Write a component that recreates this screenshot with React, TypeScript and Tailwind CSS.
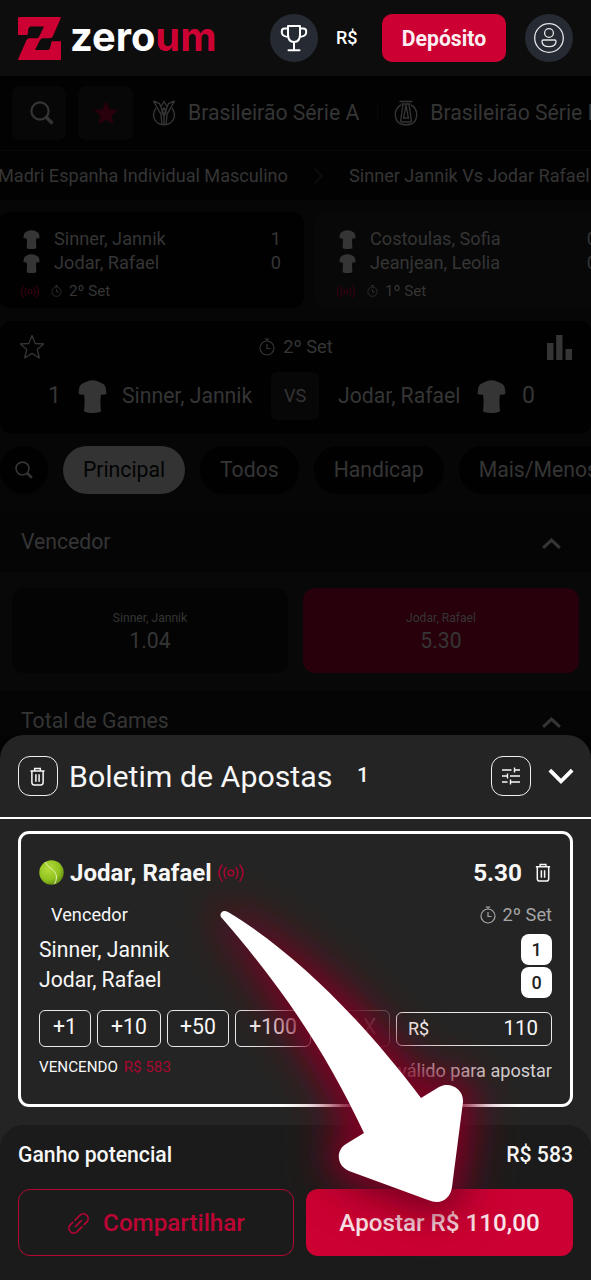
import type { ReactNode } from 'react';
import clsx from 'clsx';

type IconProps = { className?: string };

const tabs = ['Todos', 'Handicap', 'Mais/Menos'];

const liveMatches = [
    { home: 'Sinner, Jannik', away: 'Jodar, Rafael', score: [1, 0], set: '2º Set', active: true },
    { home: 'Costoulas, Sofia', away: 'Jeanjean, Leolia', score: [0, 0], set: '1º Set', active: false },
];

const chips = [
    { label: '+1', width: 'w-[52px]' },
    { label: '+10', width: 'w-16' },
    { label: '+50', width: 'w-[62px]' },
    { label: '+100', width: 'w-[76px]' },
];

function LogoMark() {
    return (
        <svg className="h-[43px] w-[43px] shrink-0" viewBox="0 0 43 43" fill="#cc0033">
            <path d="M1 0H42Q43.200 0 42.700 1.200L35 19Q34 21.300 31.500 21.300H25Q23 21.300 22 23L17 33H29.500Q31.500 33 32 31L33.700 24.300H43V43H1Q-.200 43 .300 41.800L8.300 23.500Q9.300 21.300 11.500 21.300H18.500Q20.300 21.300 21 19.800L26 9.500H13Q11 9.500 10.500 11.500L9.500 18H0V1Q0 0 1 0Z" />
        </svg>
    );
}

function TrophyIcon({ className }: IconProps) {
    return (
        <svg className={className} viewBox="0 0 28 28" fill="none" stroke="currentColor" strokeWidth="2" strokeLinecap="round" strokeLinejoin="round">
            <path d="M8 2H20V10.500C20 15 18 18 14 18S8 15 8 10.500ZM8 4.500H4.500Q1.800 4.500 1.800 7.500V8.500Q2.200 12.500 8.500 13M20 4.500H23.500Q26.200 4.500 26.200 7.500V8.500Q25.800 12.500 19.500 13M14 18V26M8.500 26.300H19.500" />
        </svg>
    );
}

function UserIcon({ className }: IconProps) {
    return (
        <svg className={className} viewBox="0 0 32 32" fill="none" stroke="currentColor" strokeWidth="1.300">
            <circle cx="16" cy="16" r="14.300" />
            <circle cx="16" cy="11" r="4.400" />
            <path d="M10.300 18H21.700Q23 18 23 19.300C23 22.800 20.300 24.700 16 24.700S9 22.800 9 19.300Q9 18 10.300 18Z" />
        </svg>
    );
}

function SearchIcon({ className }: IconProps) {
    return (
        <svg className={className} viewBox="0 0 24 24" fill="none" stroke="currentColor">
            <circle cx="10" cy="10" r="8.600" strokeWidth="2.200" />
            <path d="M16 16L22.500 22.500" strokeWidth="3.400" />
        </svg>
    );
}

function StarIcon({ className, filled }: IconProps & { filled?: boolean }) {
    return (
        <svg className={className} viewBox="0 0 26 26" fill={filled ? 'currentColor' : 'none'} stroke="currentColor" strokeWidth="1.300" strokeLinejoin="round">
            <path d="M13 1.500L16.200 9.500L24.700 10L18.200 15.500L20.300 24L13 19.400L5.700 24L7.800 15.500L1.300 10L9.800 9.500Z" />
        </svg>
    );
}

function CupAIcon() {
    return (
        <svg className="h-[26px] w-[24px]" viewBox="0 0 24 26" fill="none" stroke="currentColor" strokeWidth="1.400">
            <path d="M1.500 1L9 14.500L10 24.500M22.500 1L15 14.500L14 24.500M1.500 1L7.500 3.500L12 15L16.500 3.500L22.500 1M9.300 6L12 1.500L14.700 6M12 8L9.800 12L12 16L14.200 12ZM12 16V25" />
            <path d="M4 8C-.500 14 1.500 21.500 8 24Q12 25.500 16 24C22.500 21.500 24.500 14 20 8" />
        </svg>
    );
}

function CupBIcon() {
    return (
        <svg className="h-[26px] w-[24px]" viewBox="0 0 24 26" fill="none" stroke="currentColor" strokeWidth="1.400">
            <path d="M5.500 1.500H18.500M7.500 4H16.500M9 4L6.500 22M15 4L17.500 22M12 5L9.500 19M12 5L14.500 19M9 18H15M7 22H17" />
            <path d="M7 5C-1 9-.500 22 8 24.300Q12 25.300 16 24.300C24.500 22 25 9 17 5" />
        </svg>
    );
}

function ShirtIcon({ className }: IconProps) {
    return (
        <svg className={className} viewBox="0 0 28 33" fill="currentColor">
            <path d="M9.500 1Q14-.300 18.500 1L24 3.500Q27 5 27.500 9L28 14Q25.500 15.300 22.500 14.500L22 19Q21.800 25 22.500 31.500Q19 33 14 33T5.500 31.500Q6.200 25 6 19L5.500 14.500Q2.500 15.300 0 14L.500 9Q1 5 4 3.500Z" />
        </svg>
    );
}

function LiveIcon({ className }: IconProps) {
    return (
        <svg className={className} viewBox="0 0 26 18" fill="none" stroke="currentColor" strokeWidth="1.500" strokeLinecap="round">
            <circle cx="13" cy="9" r="2.800" />
            <path d="M8 3.500Q4.200 9 8 14.500M18 3.500Q21.800 9 18 14.500M4 1Q-2 9 4 17M22 1Q28 9 22 17" />
        </svg>
    );
}

function StopwatchIcon({ className }: IconProps) {
    return (
        <svg className={className} viewBox="0 0 16 18" fill="none" stroke="currentColor" strokeWidth="1.200">
            <circle cx="8" cy="10" r="7" />
            <path d="M5.800 1H10.200M8 1V3M8 6V10.500H11.500" />
        </svg>
    );
}

function BarsIcon() {
    return (
        <svg className="h-[25px] w-[25px]" viewBox="0 0 25 25" fill="currentColor">
            <path d="M0 8H6.500V25H0ZM9.200 0H15.500V25H9.200ZM18.500 14H25V25H18.500Z" />
        </svg>
    );
}

function TrashIcon({ className }: IconProps) {
    return (
        <svg className={className} viewBox="0 0 16 20" fill="none" stroke="currentColor" strokeWidth="1.600">
            <path d="M.500 4H15.500M5 4V1.500H11V4M2 4V16.500Q2 19 4.500 19H11.500Q14 19 14 16.500V4M6.300 7.500V15.500M9.700 7.500V15.500" />
        </svg>
    );
}

function SlidersIcon({ className }: IconProps) {
    return (
        <svg className={className} viewBox="0 0 18 18" fill="none" stroke="currentColor" strokeWidth="1.400">
            <path d="M0 3H9.500M12.500 3H18M12.500 .500V5.500M0 9H5.500M5.500 6.500V11.500M8 9H18M0 15H5.500M8.500 15H18M8.500 12.500V17.500" />
        </svg>
    );
}

function LinkIcon({ className }: IconProps) {
    return (
        <svg className={className} viewBox="0 0 22 22" fill="none" stroke="currentColor" strokeWidth="1.500" strokeLinecap="round">
            <path transform="rotate(-45 11 11)" d="M11 6.400H17.500A4.600 4.600 0 0 1 17.500 15.600H14M11 15.600H4.500A4.600 4.600 0 0 1 4.500 6.400H8M7 11H15" />
        </svg>
    );
}

function Chevron({ className, d, stroke = 3 }: IconProps & { d: string; stroke?: number }) {
    return (
        <svg className={className} viewBox="0 0 24 16" fill="none" stroke="currentColor" strokeWidth={stroke}>
            <path d={d} />
        </svg>
    );
}

function TennisBall() {
    return (
        <svg className="h-[25px] w-[25px] shrink-0" viewBox="0 0 25 25">
            <defs>
                <radialGradient id="ball" cx="38%" cy="35%" r="70%">
                    <stop offset="0%" stopColor="#b6dc3c" />
                    <stop offset="65%" stopColor="#90c21f" />
                    <stop offset="100%" stopColor="#648d14" />
                </radialGradient>
            </defs>
            <circle cx="12.500" cy="12.500" r="12.200" fill="url(#ball)" />
            <path d="M6.500 2C8 8 17 9 17.500 17Q17.500 21 15.500 24" fill="none" stroke="#e4efb0" strokeWidth="1" />
        </svg>
    );
}

function Header() {
    return (
        <header className="flex h-[76px] items-center bg-[#0d0d0d] pl-[18px]">
            <LogoMark />
            <span className="ml-[9px] w-[190px] -translate-y-[1px] font-['Inter',sans-serif] text-[39.800px] leading-[44px] font-bold text-white">
                zero<span className="text-[#cc0033]">um</span>
            </span>
            <span className="ml-[10px] flex h-12 w-12 shrink-0 items-center justify-center rounded-full bg-[#262b33] text-white">
                <TrophyIcon className="h-7 w-7" />
            </span>
            <span className="ml-[18px] w-[46px] text-lg font-medium text-white">R$</span>
            <button className="h-12 w-[124px] shrink-0 rounded-[10px] bg-[#cc0033] pt-[2px] text-[21.2px] font-bold text-[#fdeef2]">
                Depósito
            </button>
            <span className="ml-[19px] flex h-12 w-12 shrink-0 items-center justify-center rounded-full bg-[#262b33] text-[#e4e5e7]">
                <UserIcon className="h-8 w-8" />
            </span>
        </header>
    );
}

function LeagueNav() {
    return (
        <nav className="flex h-[75px] items-center overflow-hidden border-b border-[#070707] bg-[#020202] pl-3 text-[21.2px] whitespace-nowrap">
            <span className="flex h-[54px] w-[54px] shrink-0 items-center justify-center rounded-lg bg-[#070707] pl-[5px]">
                <SearchIcon className="h-6 w-6" />
            </span>
            <span className="ml-3 flex h-[54px] w-[55px] shrink-0 items-center justify-center rounded-lg bg-[#070707] text-[#29000c]">
                <StarIcon className="h-6 w-6" filled />
            </span>
            <span className="ml-[19px] shrink-0">
                <CupAIcon />
            </span>
            <span className="ml-3 shrink-0">Brasileirão Série A</span>
            <span className="mr-4 ml-[18px] h-[18px] w-px shrink-0 bg-[#090909]" />
            <span className="shrink-0">
                <CupBIcon />
            </span>
            <span className="ml-3 shrink-0">Brasileirão Série B</span>
        </nav>
    );
}

function Breadcrumb() {
    return (
        <div className="flex h-[49px] items-center overflow-hidden bg-[#020202] text-[18.1px] whitespace-nowrap">
            <span className="-ml-[2px] w-[290px] shrink-0">Madri Espanha Individual Masculino</span>
            <Chevron className="ml-[19px] h-4 w-6 shrink-0 text-[#0c0c0c]" d="M8 1L15 8L8 15" stroke={2} />
            <span className="ml-[18px] shrink-0">Sinner Jannik Vs Jodar Rafael</span>
        </div>
    );
}

function MatchCard({ match }: { match: (typeof liveMatches)[number] }) {
    const rows = [match.home, match.away];

    return (
        <div className={clsx('h-24 w-[306px] shrink-0 rounded-xl pt-[15px] pr-[23px] pl-[22px]', match.active ? 'bg-[#010101]' : 'bg-[#080808]')}>
            {rows.map((name, i) => (
                <div key={name} className="flex h-6 items-center text-[18.2px]">
                    <ShirtIcon className="ml-[3px] h-[19px] w-[17px]" />
                    <span className="ml-[14px] flex-1">{name}</span>
                    <span>{match.score[i]}</span>
                </div>
            ))}
            <div className="mt-[6px] flex h-5 items-center text-[15.2px]">
                <LiveIcon className="h-[13px] w-5 text-[#350010]" />
                <StopwatchIcon className="ml-[11px] h-3 w-[11px]" />
                <span className="ml-[7px]">{match.set}</span>
            </div>
        </div>
    );
}

function Scoreboard() {
    return (
        <section className="mt-[13px] h-[113px] rounded-xl bg-[#010101] pt-[13px]">
            <div className="flex h-[26px] items-center justify-between pr-[19px] pl-[19px]">
                <StarIcon className="h-[26px] w-[26px]" />
                <span className="flex items-center text-[18.2px]">
                    <StopwatchIcon className="mr-2 h-[18px] w-4" />
                    2º Set
                </span>
                <BarsIcon />
            </div>
            <div className="mt-3 flex h-12 items-center text-[21.2px]">
                <span className="w-[78px] shrink-0 pl-12 text-[23px]">1</span>
                <ShirtIcon className="h-[33px] w-[29px] shrink-0" />
                <span className="w-[164px] shrink-0 pb-px pl-[15px]">Sinner, Jannik</span>
                <span className="flex h-12 w-12 shrink-0 items-center justify-center rounded-md bg-[#070707] text-lg">VS</span>
                <span className="ml-[19px] w-[139px] shrink-0 pb-px">Jodar, Rafael</span>
                <ShirtIcon className="h-[33px] w-[29px] shrink-0" />
                <span className="ml-4 text-[23px]">0</span>
            </div>
        </section>
    );
}

function MarketTabs() {
    return (
        <div className="mt-3 flex h-12 gap-[15px] overflow-hidden text-[21.2px] whitespace-nowrap">
            <span className="flex w-12 shrink-0 items-center justify-center rounded-full bg-[#010101]">
                <SearchIcon className="h-[18px] w-[18px]" />
            </span>
            <span className="flex w-[122px] shrink-0 items-center justify-center rounded-full bg-[#333] pb-px text-[#030303]">
                Principal
            </span>
            {tabs.map((tab) => (
                <span key={tab} className="flex shrink-0 items-center justify-center rounded-full bg-[#010101] px-5 pb-px">
                    {tab}
                </span>
            ))}
        </div>
    );
}

function MarketHeader({ title }: { title: string }) {
    return (
        <div className="flex h-[60px] items-center justify-between bg-[#050505] pr-[30px] pl-[21px] text-[21.2px]">
            <span>{title}</span>
            <Chevron className="mt-1 h-4 w-[19px]" d="M1.500 13L12 3L22.500 13" stroke={3.8} />
        </div>
    );
}

function Selection({ name, odd, selected }: { name: string; odd: string; selected?: boolean }) {
    return (
        <div className={clsx('flex h-[85px] w-[276px] flex-col items-center rounded-xl pt-[21px]', selected ? 'bg-[#28000b]' : 'bg-[#040404]')}>
            <span className="text-[12.1px] leading-[18px]">{name}</span>
            <span className="text-[21.2px] leading-[27px]">{odd}</span>
        </div>
    );
}

function SquareButton({ children }: { children: ReactNode }) {
    return (
        <button className="flex h-10 w-10 shrink-0 items-center justify-center rounded-xl border-[1.5px] border-[#f0f0f0]">
            {children}
        </button>
    );
}

function BetSlip() {
    return (
        <section className="flex h-[545px] flex-col rounded-t-[24px] bg-[#242424] text-[#f7f7f7]">
            <div className="flex h-[84px] shrink-0 items-center border-b-2 border-white pr-[17px] pl-[18px]">
                <SquareButton>
                    <TrashIcon className="mr-px h-[19px] w-[15px]" />
                </SquareButton>
                <h2 className="ml-[11px] w-[288px] pt-[2px] text-[30.3px] whitespace-nowrap">Boletim de Apostas</h2>
                <span className="-mt-px flex-1 text-[21px] font-medium">1</span>
                <SquareButton>
                    <SlidersIcon className="h-[18px] w-[18px]" />
                </SquareButton>
                <Chevron className="mt-px ml-[17px] h-[17px] w-[26px] text-white" d="M1.500 2L12 12.500L22.500 2" stroke={3.6} />
            </div>

            <div className="mx-[18px] mt-3 h-[276px] shrink-0 rounded-[11px] border-[3px] border-white px-[18px] pt-[23px]">
                <div className="flex h-[31px] items-center">
                    <TennisBall />
                    <span className="ml-[6px] text-2xl font-bold tracking-[0.05px]">Jodar, Rafael</span>
                    <LiveIcon className="mt-px ml-[6px] h-[18px] w-[26px] text-[#a80730]" />
                    <span className="mt-[2px] ml-auto text-[24.3px] font-bold">5.30</span>
                    <TrashIcon className="mr-px ml-[13px] h-[19px] w-4" />
                </div>
                <div className="mt-[15px] flex h-6 items-center justify-between pl-3 text-[18.2px]">
                    <span>Vencedor</span>
                    <span className="flex items-center text-[#a5a5a5]">
                        <StopwatchIcon className="mr-[7px] h-[18px] w-4" />
                        2º Set
                    </span>
                </div>
                <div className="mt-[7px] flex h-16 justify-between">
                    <div className="pt-px text-[21.2px] leading-[30px]">
                        <p>Sinner, Jannik</p>
                        <p>Jodar, Rafael</p>
                    </div>
                    <div className="flex flex-col gap-[2px] text-lg font-medium text-[#222]">
                        <span className="flex h-[31px] w-[31px] items-center justify-center rounded-lg bg-white">1</span>
                        <span className="flex h-[31px] w-[31px] items-center justify-center rounded-lg bg-white">0</span>
                    </div>
                </div>
                <div className="mt-3 flex h-[37px] items-center gap-[6px] text-[21.2px]">
                    {chips.map((chip) => (
                        <span
                            key={chip.label}
                            className={clsx('flex h-[37px] shrink-0 items-center justify-center rounded-md border-[1.5px] border-[#e9e9e9] pb-[3px]', chip.width)}
                        >
                            {chip.label}
                        </span>
                    ))}
                    <span className="flex h-[37px] w-[73px] shrink-0 items-center justify-center rounded-md border-[1.5px] border-white pb-[3px] opacity-30">
                        MAX
                    </span>
                    <span className="flex h-[34px] flex-1 items-center justify-between rounded-md border-[1.5px] border-[#e9e9e9] pr-[13px] pl-[11px]">
                        <span className="text-lg">R$</span>
                        <span className="text-[20.5px]">110</span>
                    </span>
                </div>
                <div className="mt-[10px] flex h-7 items-center justify-between text-[18.1px]">
                    <span className="-mt-2 text-[15.2px]">
                        VENCENDO <span className="ml-[2px] text-[#a80730]">R$ 583</span>
                    </span>
                    <span className="text-[#d5d0d1]">válido para apostar</span>
                </div>
            </div>

            <footer className="mt-[18px] flex-1 rounded-t-[24px] bg-[#1b1b1b] px-[18px] pt-4">
                <div className="flex h-7 items-center justify-between text-[21.2px] font-medium">
                    <span>Ganho potencial</span>
                    <span>R$ 583</span>
                </div>
                <div className="mt-5 flex h-[67px] gap-3 text-[24.2px] font-medium">
                    <button className="flex w-[276px] items-center justify-center rounded-xl border-[1.5px] border-[#b50732] pt-[2px] text-[#bd0535]">
                        <LinkIcon className="mr-[13px] h-[23px] w-[23px]" />
                        Compartilhar
                    </button>
                    <button className="flex-1 rounded-xl bg-[#cc0033] pt-px text-[#fbe6eb]">Apostar R$ 110,00</button>
                </div>
            </footer>
        </section>
    );
}

const ARROW =
    'M228 912C300 955 370 1030 421 1098L439 1087C450 1081 464 1089 463 1102L452 1187C450 1200 440 1205 428 1200L349 1171C337 1166 335 1151 346 1144L364 1133C325 1050 280 985 221 917C219 913 223 909 228 912Z';

function PointerArrow() {
    return (
        <svg className="pointer-events-none absolute top-0 left-0 h-[1280px] w-[591px]" viewBox="0 0 591 1280">
            <defs>
                <linearGradient id="glow-fade" gradientUnits="userSpaceOnUse" x1="0" y1="905" x2="0" y2="1020">
                    <stop offset="0" stopColor="#7c0020" stopOpacity="0.25" />
                    <stop offset="1" stopColor="#7c0020" />
                </linearGradient>
                <filter id="glow-wide" x="-50%" y="-50%" width="200%" height="200%">
                    <feGaussianBlur stdDeviation="26" />
                </filter>
                <filter id="glow-near" x="-50%" y="-50%" width="200%" height="200%">
                    <feGaussianBlur stdDeviation="15" />
                </filter>
            </defs>
            <path d={ARROW} fill="url(#glow-fade)" stroke="url(#glow-fade)" strokeWidth="16" filter="url(#glow-wide)" />
            <path d={ARROW} fill="url(#glow-fade)" stroke="url(#glow-fade)" strokeWidth="3" filter="url(#glow-near)" />
            <path d={ARROW} fill="#fff" />
        </svg>
    );
}

export default function App() {
    return (
        <div className="relative h-[1280px] w-[591px] overflow-hidden bg-[#030303] font-['Roboto',sans-serif] text-[#353535]">
            <div className="h-[735px] overflow-hidden">
                <Header />
                <LeagueNav />
                <Breadcrumb />
                <main className="bg-[#060606] pt-3">
                    <div className="-ml-0.5 flex gap-[10px] overflow-hidden">
                        {liveMatches.map((match) => (
                            <MatchCard key={match.home} match={match} />
                        ))}
                    </div>
                    <Scoreboard />
                    <MarketTabs />
                    <div className="mt-[18px]">
                        <MarketHeader title="Vencedor" />
                        <div className="flex h-[119px] gap-[15px] bg-[#080808] px-3 pt-4">
                            <Selection name="Sinner, Jannik" odd="1.04" />
                            <Selection name="Jodar, Rafael" odd="5.30" selected />
                        </div>
                        <MarketHeader title="Total de Games" />
                    </div>
                </main>
            </div>
            <BetSlip />
            <PointerArrow />
        </div>
    );
}
